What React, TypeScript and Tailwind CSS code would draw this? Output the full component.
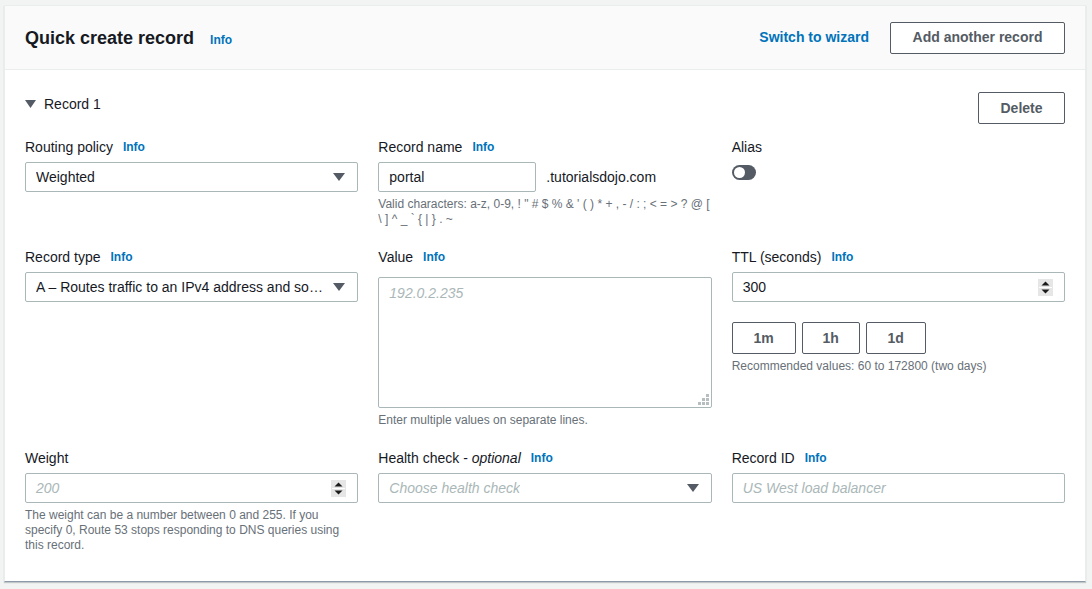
import type { ReactNode } from 'react';

const font = { fontFamily: '"Liberation Sans", Arial, sans-serif' };

function Info() {
  return <span className="ml-[10px] text-[12px] font-bold text-[#0073bb]">Info</span>;
}

function Label({ children, info = true }: { children: ReactNode; info?: boolean }) {
  return (
    <div className="flex h-[22px] items-center text-[14px] text-[#16191f]">
      <span>{children}</span>
      {info && <Info />}
    </div>
  );
}

function Caret() {
  return (
    <svg width="12" height="8" viewBox="0 0 12 8" className="shrink-0">
      <polygon points="0,0 12,0 6,8" fill="#545b64" />
    </svg>
  );
}

function Select({ value, placeholder }: { value?: string; placeholder?: string }) {
  return (
    <div className="mt-[4px] flex h-[30px] items-center justify-between rounded-[2px] border border-[#aab7b8] bg-white pl-[10px] pr-[12px]">
      {value ? (
        <span className="truncate pr-[10px] text-[14px] text-[#16191f]">{value}</span>
      ) : (
        <span className="truncate text-[14px] italic text-[#aab7b8]">{placeholder}</span>
      )}
      <Caret />
    </div>
  );
}

function Spinner() {
  return (
    <svg width="15" height="17" viewBox="0 0 15 17" className="shrink-0">
      <rect x="0" y="0" width="15" height="17" fill="#e6e6e6" />
      <line x1="1" y1="8.5" x2="14" y2="8.5" stroke="#ffffff" strokeWidth="1" />
      <polygon points="3.5,6.5 11.5,6.5 7.5,2.5" fill="#1a1a1a" />
      <polygon points="3.5,10.5 11.5,10.5 7.5,14.5" fill="#1a1a1a" />
    </svg>
  );
}

function NumberInput({ value, placeholder }: { value?: string; placeholder?: string }) {
  return (
    <div className="mt-[4px] flex h-[30px] items-center justify-between rounded-[2px] border border-[#aab7b8] bg-white pl-[10px] pr-[11px]">
      {value ? (
        <span className="text-[14px] text-[#16191f]">{value}</span>
      ) : (
        <span className="text-[14px] italic text-[#aab7b8]">{placeholder}</span>
      )}
      <Spinner />
    </div>
  );
}

function Helper({ children, className = '' }: { children: ReactNode; className?: string }) {
  return <div className={`text-[12px] leading-[15px] text-[#687078] ${className}`}>{children}</div>;
}

function OutlineButton({ children, className = '' }: { children: ReactNode; className?: string }) {
  return (
    <button className={`flex h-[32px] items-center justify-center rounded-[2px] border border-[#545b64] bg-white text-[14px] font-bold text-[#545b64] ${className}`}>
      {children}
    </button>
  );
}

function ResizeDots() {
  return (
    <svg width="11" height="11" viewBox="0 0 11 11" className="absolute bottom-[3px] right-[3px]">
      <rect x="8" y="0" width="3" height="3" fill="#b6bec0" />
      <rect x="4" y="4" width="3" height="3" fill="#b6bec0" />
      <rect x="8" y="4" width="3" height="3" fill="#b6bec0" />
      <rect x="0" y="8" width="3" height="3" fill="#b6bec0" />
      <rect x="4" y="8" width="3" height="3" fill="#b6bec0" />
      <rect x="8" y="8" width="3" height="3" fill="#b6bec0" />
    </svg>
  );
}

export default function App() {
  return (
    <div className="min-h-[589px] bg-[#f2f3f3] pl-[4px] pt-[5px]" style={font}>
      <div className="w-[1082px] border border-[#eaeded] border-b-[#8d99a8] bg-white shadow-[0_1px_1px_0_rgba(0,28,36,0.2)]">
        {/* Header */}
        <div className="flex h-[64px] items-center justify-between border-b border-[#eaeded] bg-[#fafafa] px-[20px]">
          <div className="flex items-center">
            <h2 className="mt-[1px] text-[18px] font-bold text-[#16191f]">Quick create record</h2>
            <span className="ml-[16px] mt-[4px] text-[12px] font-bold text-[#0073bb]">Info</span>
          </div>
          <div className="flex items-center">
            <span className="text-[14px] font-bold text-[#0073bb]">Switch to wizard</span>
            <OutlineButton className="ml-[21px] w-[175px]">Add another record</OutlineButton>
          </div>
        </div>

        {/* Body */}
        <div className="px-[20px] pb-[28px] pt-[22px]">
          <div className="flex items-start justify-between">
            <div className="mt-[2px] flex h-[20px] items-center text-[14px] text-[#16191f]">
              <svg width="11" height="8" viewBox="0 0 11 8" className="mr-[8px]">
                <polygon points="0,0 11,0 5.5,8" fill="#545b64" />
              </svg>
              Record 1
            </div>
            <OutlineButton className="w-[87px]">Delete</OutlineButton>
          </div>

          <div className="mt-[12px] grid grid-cols-3 gap-x-[20px] gap-y-[19px]">
            {/* Row 1 */}
            <div>
              <Label>Routing policy</Label>
              <Select value="Weighted" />
            </div>
            <div>
              <Label>Record name</Label>
              <div className="mt-[4px] flex items-center">
                <input
                  readOnly
                  value="portal"
                  className="h-[30px] w-[158px] rounded-[2px] border border-[#aab7b8] bg-white px-[10px] text-[14px] text-[#16191f] outline-none"
                />
                <span className="ml-[10px] text-[14px] text-[#16191f]">.tutorialsdojo.com</span>
              </div>
              <Helper className="mt-[5px]">
                Valid characters: a-z, 0-9, ! " # $ % &amp; ' ( ) * + , - / : ; &lt; = &gt; ? @ [
                <br />
                \ ] ^ _ ` {'{'} | {'}'} . ~
              </Helper>
            </div>
            <div>
              <Label info={false}>Alias</Label>
              <div className="mt-[7px] flex h-[15px] w-[24px] items-center rounded-full bg-[#545b64] px-[2px]">
                <div className="h-[11px] w-[11px] rounded-full bg-white" />
              </div>
            </div>

            {/* Row 2 */}
            <div>
              <Label>Record type</Label>
              <Select value="A – Routes traffic to an IPv4 address and some AWS resources" />
            </div>
            <div>
              <Label>Value</Label>
              <div className="relative mt-[9px]">
                <textarea
                  readOnly
                  placeholder="192.0.2.235"
                  className="block h-[131px] w-full resize-none rounded-[2px] border border-[#aab7b8] bg-white px-[10px] py-[4px] text-[14px] leading-[22px] outline-none placeholder:italic placeholder:text-[#aab7b8]"
                />
                <ResizeDots />
              </div>
              <Helper className="mt-[5px]">Enter multiple values on separate lines.</Helper>
            </div>
            <div>
              <Label>TTL (seconds)</Label>
              <NumberInput value="300" />
              <div className="mt-[20px] flex gap-[6px]">
                <OutlineButton className="h-[30px] w-[64px]">1m</OutlineButton>
                <OutlineButton className="h-[30px] w-[58px]">1h</OutlineButton>
                <OutlineButton className="h-[30px] w-[60px]">1d</OutlineButton>
              </div>
              <Helper className="mt-[5px]">Recommended values: 60 to 172800 (two days)</Helper>
            </div>

            {/* Row 3 */}
            <div>
              <Label info={false}>Weight</Label>
              <NumberInput placeholder="200" />
              <Helper className="mt-[5px]">
                The weight can be a number between 0 and 255. If you
                <br />
                specify 0, Route 53 stops responding to DNS queries using
                <br />
                this record.
              </Helper>
            </div>
            <div>
              <Label>
                Health check - <span className="italic">optional</span>
              </Label>
              <Select placeholder="Choose health check" />
            </div>
            <div>
              <Label>Record ID</Label>
              <input
                readOnly
                placeholder="US West load balancer"
                className="mt-[4px] h-[30px] w-full rounded-[2px] border border-[#aab7b8] bg-white px-[10px] text-[14px] outline-none placeholder:italic placeholder:text-[#aab7b8]"
              />
            </div>
          </div>
        </div>
      </div>
    </div>
  );
}
